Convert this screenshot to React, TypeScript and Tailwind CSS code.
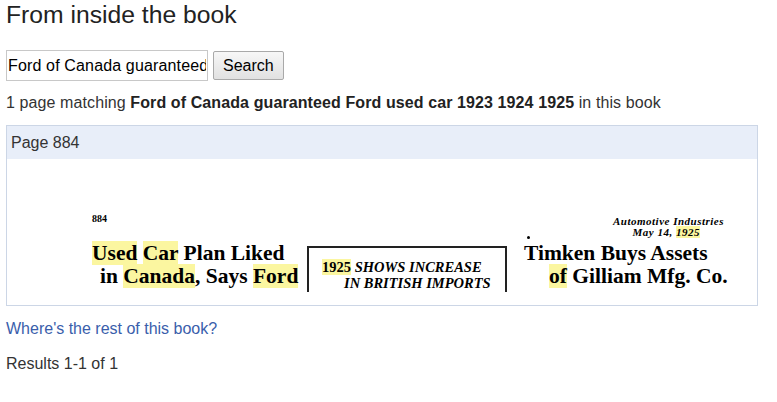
import React from "react";

const hl = "bg-[#fbf6a0]";

export default function App() {
  return (
    <div className="w-[777px] h-[402px] bg-white text-[#333] font-['Liberation_Sans',Arial,sans-serif] px-[6px] overflow-hidden">
      <h1 className="text-[24.7px] leading-[28px] pt-[1px] text-[#222] font-normal">From inside the book</h1>
      <div className="flex items-center gap-[5px] mt-[21px]">
        <input
          readOnly
          value="Ford of Canada guaranteed Ford used car 1923 1924 1925"
          className="w-[202px] h-[31px] border border-[#c8c8c8] px-[1px] text-[16px] tracking-[0.15px] text-black outline-none font-['Liberation_Sans',Arial,sans-serif]"
        />
        <button className="h-[29px] px-[9px] border border-[#a9a9a9] rounded-[2px] bg-gradient-to-b from-[#f7f7f7] to-[#e1e1e1] text-[16px] text-black leading-none">
          Search
        </button>
      </div>
      <p className="text-[16px] leading-[18px] mt-[13px] tracking-[0.1px]">
        1 page matching <b className="text-[#222]">Ford of Canada guaranteed Ford used car 1923 1924 1925</b> in this book
      </p>
      <div className="mt-[13px] w-[752px] border border-[#ccd6e6]">
        <div className="h-[33px] bg-[#e8eef9] flex items-center pl-[4px] text-[16px]">Page 884</div>
        <div className="h-[146px] pb-[13px]">
          <div className="h-full overflow-hidden flex items-start pl-[85px] text-black font-['Liberation_Serif',serif]">
            <div className="flex flex-col pt-[55px] w-[215px] shrink-0">
              <div className="text-[10px] font-bold leading-[10px]">884</div>
              <div className="mt-[18px] text-[21.5px] font-bold leading-[23px] whitespace-nowrap">
                <div>
                  <span className={hl}>Used</span> <span className={hl}>Car</span> Plan Liked
                </div>
                <div className="pl-[8px]">
                  in <span className={hl}>Canada</span>, Says <span className={hl}>Ford</span>
                </div>
              </div>
            </div>
            <div className="mt-[87px] w-[200px] h-[60px] shrink-0 border-[2px] border-b-0 border-[#222] pt-[11px] pl-[13px] italic font-bold text-[14.5px] leading-[16px] whitespace-nowrap">
              <div>
                <span className={`${hl} not-italic`}>1925</span> SHOWS INCREASE
              </div>
              <div className="pl-[22px]">IN BRITISH IMPORTS</div>
            </div>
            <div className="flex flex-col pt-[57px] pl-[17px] w-[230px] shrink-0">
              <div className="self-end pr-[13px] text-right italic font-bold text-[11px] leading-[11px] tracking-[0.5px] whitespace-nowrap">
                <div>Automotive Industries</div>
                <div className="pr-[24px]">
                  May 14, <span className={hl}>1925</span>
                </div>
              </div>
              <div className="w-[3px] h-[3px] bg-black rounded-full ml-[3px] mt-[-2px]" />
              <div className="mt-[3px] text-[21.5px] font-bold leading-[23px] whitespace-nowrap">
                <div>Timken Buys Assets</div>
                <div className="pl-[25px]">
                  <span className={hl}>of</span> Gilliam Mfg. Co.
                </div>
              </div>
            </div>
          </div>
        </div>
      </div>
      <a href="#" className="block mt-[13px] text-[16px] leading-[20px] text-[#3a5eab]">Where's the rest of this book?</a>
      <p className="mt-[15px] text-[16px] leading-[20px]">Results 1-1 of 1</p>
    </div>
  );
}
